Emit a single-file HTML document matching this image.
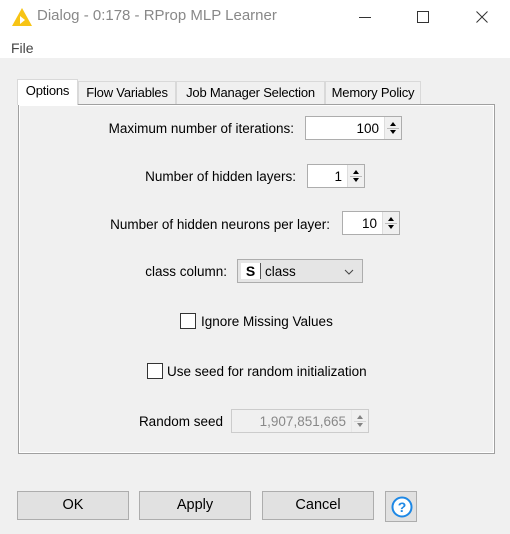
<!DOCTYPE html>
<html><head><style>
*{box-sizing:border-box;margin:0;padding:0}
body{width:510px;height:534px;background:#f0f0f0;font-family:"Liberation Sans",sans-serif;font-size:13.5px;color:#000;position:relative;overflow:hidden}
.a{position:absolute}
.t{position:absolute;white-space:nowrap}
.inp{position:absolute;background:#fff;border:1px solid #adadad;}
.sp{position:absolute;right:0;top:0;bottom:0;width:17px;border-left:1px solid #ddd;background:#f0f0f0}
.sp:before{content:"";position:absolute;left:5px;top:5px;border:3.5px solid transparent;border-bottom:4px solid #000;border-top:0}
.sp:after{content:"";position:absolute;left:5px;bottom:5px;border:3.5px solid transparent;border-top:4px solid #000;border-bottom:0}
.sp i{position:absolute;left:2px;right:2px;top:50%;border-top:1px solid #bbb}
.btn{position:absolute;background:#e1e1e1;border:1px solid #adadad;text-align:center;line-height:27px;font-size:14.5px}
.cb{position:absolute;width:16px;height:16px;border:1px solid #333;background:#fff}
.tab{position:absolute;top:81px;height:23px;border:1px solid #d9d9d9;border-bottom:none;background:#f0f0f0;line-height:22px;text-align:center;font-size:13px;letter-spacing:-0.2px}
</style></head><body>
<div class="a" style="left:0;top:0;width:510px;height:58px;background:#fff"></div>
<svg class="a" style="left:11px;top:7px" width="22" height="20"><polygon points="11,1 21,19 1,19" fill="#f7c415"/><polygon points="9,9 14,13 9,17" fill="#fff"/></svg>
<div class="t" style="left:37px;top:7px;font-size:15px;color:#888">Dialog - 0:178 - RProp MLP Learner</div>
<div class="a" style="left:359px;top:17px;width:12px;border-top:1px solid #333"></div>
<div class="a" style="left:417px;top:11px;width:12px;height:12px;border:1px solid #333"></div>
<svg class="a" style="left:476px;top:11px" width="12" height="12"><path d="M0.5 0.5L11.5 11.5M11.5 0.5L0.5 11.5" stroke="#333" stroke-width="1"/></svg>
<div class="t" style="left:11px;top:40px;font-size:14px;color:#444">File</div>

<div class="a" style="left:18px;top:104px;width:477px;height:350px;border:1px solid #a0a0a0;background:#f0f0f0;box-shadow:inset 0 0 0 1px #fff"></div>
<div class="tab" style="left:78px;width:98px">Flow Variables</div>
<div class="tab" style="left:176px;width:149px">Job Manager Selection</div>
<div class="tab" style="left:325px;width:96px">Memory Policy</div>
<div class="tab" style="left:17px;top:79px;height:26px;width:61px;background:#fff;border-color:#d9d9d9">Options</div>

<div class="t" style="right:216px;top:121px">Maximum number of iterations:</div>
<div class="inp" style="left:305px;top:116px;width:97px;height:24px"><span class="t" style="right:22px;top:4px">100</span><div class="sp"><i></i></div></div>

<div class="t" style="right:214px;top:169px">Number of hidden layers:</div>
<div class="inp" style="left:307px;top:164px;width:58px;height:24px"><span class="t" style="right:22px;top:4px">1</span><div class="sp"><i></i></div></div>

<div class="t" style="right:180px;top:217px">Number of hidden neurons per layer:</div>
<div class="inp" style="left:342px;top:211px;width:58px;height:24px"><span class="t" style="right:22px;top:4px">10</span><div class="sp"><i></i></div></div>

<div class="t" style="right:283px;top:264px">class column:</div>
<div class="a" style="left:237px;top:259px;width:126px;height:24px;background:#e5e5e5;border:1px solid #adadad">
<div class="a" style="left:3px;top:3px;width:20px;height:16px;background:#fff;border-right:1px solid #555;font-weight:bold;font-size:14px;text-align:center;line-height:16px">S</div>
<span class="t" style="left:27px;top:4px">class</span>
<svg class="a" style="left:106px;top:9px" width="10" height="6"><polyline points="1,1 5,5 9,1" fill="none" stroke="#444"/></svg>
</div>

<div class="cb" style="left:180px;top:313px"></div>
<div class="t" style="left:201px;top:314px">Ignore Missing Values</div>
<div class="cb" style="left:147px;top:363px"></div>
<div class="t" style="left:167px;top:364px">Use seed for random initialization</div>

<div class="t" style="right:287px;top:414px">Random seed</div>
<div class="inp" style="left:231px;top:409px;width:138px;height:24px;background:#f0f0f0;border-color:#ccc"><span class="t" style="right:22px;top:4px;color:#888">1,907,851,665</span><div class="sp" style="opacity:.45"><i></i></div></div>

<div class="btn" style="left:17px;top:491px;width:112px;height:29px">OK</div>
<div class="btn" style="left:139px;top:491px;width:112px;height:29px">Apply</div>
<div class="btn" style="left:262px;top:491px;width:112px;height:29px">Cancel</div>
<div class="btn" style="left:385px;top:491px;width:32px;height:31px">
<svg class="a" style="left:5px;top:4px" width="22" height="22"><circle cx="11" cy="11" r="9.5" fill="#fff" stroke="#1e88e5" stroke-width="2"/><text x="11" y="16" text-anchor="middle" font-family="Liberation Sans" font-weight="bold" font-size="14" fill="#1e88e5">?</text></svg>
</div>
</body></html>
